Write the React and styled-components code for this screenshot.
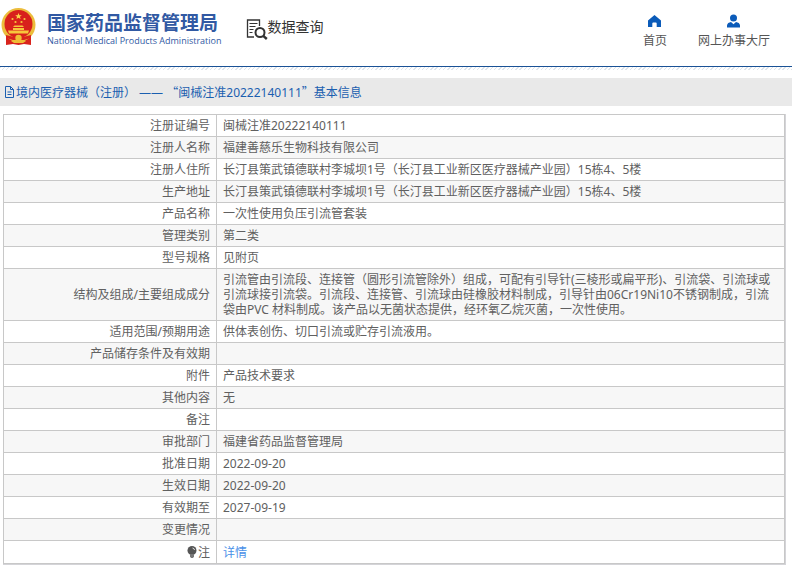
import React from 'react';
import styled, { createGlobalStyle } from 'styled-components';

const GlobalStyle = createGlobalStyle`
  body {
    margin: 0;
    background: #fff;
    color: #606060;
    font-family: "Noto Sans", "Noto Sans CJK SC", sans-serif;
    font-size: 12px;
    line-height: 15px;
  }

  a {
    text-decoration: none;
  }
`;

const Header = styled.header`
  display: flex;
  height: 66px;
  border-bottom: 1px solid #1a5296;
`;

const Hatching = styled.div`
  height: 3px;
  margin-bottom: 8px;
  background: repeating-linear-gradient(135deg, #dfe5ec 0 1px, #fff 1px 3px);
`;

const Brand = styled.a`
  display: flex;
  align-items: flex-start;
  gap: 11px;
  padding: 8px 0 0 1px;
  color: #3159a3;
`;

const BrandText = styled.div`
  padding-top: 2px;
  white-space: nowrap;
`;

const BrandName = styled.div`
  font-family: "Noto Sans CJK SC", sans-serif;
  font-size: 19px;
  line-height: 24px;
  font-weight: 700;
`;

const BrandEnglish = styled.div`
  font-family: "Open Sans", sans-serif;
  font-size: 9px;
  line-height: 14px;
`;

const Section = styled.h1`
  display: flex;
  align-items: flex-start;
  margin: 0;
  padding: 18px 0 0 24px;
  color: #333;
  font-size: 14px;
  line-height: 18px;
  font-weight: 400;
`;

const Nav = styled.nav`
  display: flex;
  gap: 31px;
  margin-left: auto;
  padding: 14px 22px 0 0;
`;

const NavLink = styled.a`
  display: flex;
  flex-direction: column;
  align-items: center;
  gap: 5px;
  color: #555;
  white-space: nowrap;

  svg {
    fill: #0b5bb9;
  }
`;

const TitleBar = styled.h2`
  display: flex;
  align-items: center;
  height: 28px;
  margin: 0 0 8px;
  padding-left: 4px;
  background: #e9e9e9;
  color: #1b5fb0;
  font-size: 12px;
  font-weight: 400;
`;

const Quote = styled.span`
  font-family: "Noto Sans CJK SC", sans-serif;
`;

const TableFrame = styled.div`
  margin: 0 6px 0 3px;
  border: solid #d4d4d8;
  border-width: 0 1px 1px 0;
`;

const Table = styled.table`
  width: 100%;
  border-collapse: collapse;
  table-layout: fixed;
`;

const Row = styled.tr`
  background: #fff;

  &:nth-child(even) {
    background: #f7f7f7;
  }
`;

const Label = styled.th`
  width: 200px;
  padding: 3px 6px;
  border: 1px solid #c8c8c8;
  font-weight: 400;
  text-align: right;
`;

const Value = styled.td`
  padding: 3px 6px;
  border: 1px solid #c8c8c8;
`;

const NoteRow = styled(Row)`
  th,
  td {
    padding-top: 4px;
  }
`;

const DetailLink = styled.a`
  color: #4a90e8;
`;

const BulbIcon = styled.svg`
  vertical-align: -1px;
  margin-right: 1px;
`;

const address = '长汀县策武镇德联村李城坝1号（长汀县工业新区医疗器械产业园）15栋4、5楼';

const rows = [
  ['注册证编号', '闽械注准20222140111'],
  ['注册人名称', '福建善慈乐生物科技有限公司'],
  ['注册人住所', address],
  ['生产地址', address],
  ['产品名称', '一次性使用负压引流管套装'],
  ['管理类别', '第二类'],
  ['型号规格', '见附页'],
  ['结构及组成/主要组成成分', '引流管由引流段、连接管（圆形引流管除外）组成，可配有引导针(三棱形或扁平形)、引流袋、引流球或引流球接引流袋。引流段、连接管、引流球由硅橡胶材料制成，引导针由06Cr19Ni10不锈钢制成，引流袋由PVC 材料制成。该产品以无菌状态提供，经环氧乙烷灭菌，一次性使用。'],
  ['适用范围/预期用途', '供体表创伤、切口引流或贮存引流液用。'],
  ['产品储存条件及有效期', ''],
  ['附件', '产品技术要求'],
  ['其他内容', '无'],
  ['备注', ''],
  ['审批部门', '福建省药品监督管理局'],
  ['批准日期', '2022-09-20'],
  ['生效日期', '2022-09-20'],
  ['有效期至', '2027-09-19'],
  ['变更情况', ''],
];

function Emblem() {
  return (
    <svg width="35" height="38" viewBox="0 0 35 38" aria-hidden="true">
      <path d="M5 28h25v9l-7-1-5.500 1-5.500-1-7 1z" fill="#d9241d" />
      <circle cx="17.500" cy="17" r="17" fill="#ecbd3c" />
      <circle cx="17.500" cy="16" r="14" fill="#d8211c" />
      <path d="M17.500 5l.9 2.200 2.400.1-1.900 1.500.7 2.300-2.100-1.300-2.100 1.300.7-2.300-1.900-1.500 2.400-.1z" fill="#fbd64a" />
      <g fill="#f7c63c">
        <circle cx="11.500" cy="11" r="1.100" />
        <circle cx="23.500" cy="11" r="1.100" />
        <circle cx="14.500" cy="14" r="1.100" />
        <circle cx="20.500" cy="14" r="1.100" />
        <path d="M12 19l1.500-1.500h8L23 19zM12 20h11v2H12zM7 22.500h21l-1 3H8z" />
      </g>
      <path d="M5 27l8 2h9l8-2v3l-7 2H12l-7-2z" fill="#d9241d" />
      <circle cx="17.500" cy="30" r="3.200" fill="#f0bd35" />
      <path d="M10 33l4-1 3.500 2 3.500-2 4 1-3 2h-9z" fill="#efbc35" />
    </svg>
  );
}

function SearchDocIcon() {
  return (
    <svg width="22" height="22" viewBox="0 0 22 22" fill="none" stroke="#333" aria-hidden="true">
      <path d="M8 19H1.500V2H13.500v6" strokeWidth="1.300" />
      <path d="M3.500 5.500h8M3.500 8.500h6M3.500 11.500h4M3.500 14.500h3" />
      <circle cx="14" cy="14.500" r="4.500" strokeWidth="2" />
      <path d="M17.300 17.800l3.500 3.200" strokeWidth="2.400" />
    </svg>
  );
}

function App() {
  return (
    <>
      <GlobalStyle />
      <Header>
        <Brand href="#">
          <Emblem />
          <BrandText>
            <BrandName>国家药品监督管理局</BrandName>
            <BrandEnglish>National Medical Products Administration</BrandEnglish>
          </BrandText>
        </Brand>
        <Section>
          <SearchDocIcon />
          数据查询
        </Section>
        <Nav>
          <NavLink href="#">
            <svg width="13" height="14" viewBox="0 0 13 14" aria-hidden="true">
              <path d="M6.500 1L0 6.500V13h4.300V9.500q0-1 1-1h2.400q1 0 1 1V13H13V6.500z" />
            </svg>
            首页
          </NavLink>
          <NavLink href="#">
            <svg width="13" height="14" viewBox="0 0 13 14" aria-hidden="true">
              <circle cx="6.500" cy="4" r="3.500" />
              <path d="M0 13.500v-2C0 9.500 2 8.300 4 8l2.500 2.300L9 8c2 .3 4 1.500 4 3.500v2z" />
            </svg>
            网上办事大厅
          </NavLink>
        </Nav>
      </Header>
      <Hatching />
      <main>
        <TitleBar>
          <svg width="12" height="12" viewBox="0 0 12 12" fill="none" stroke="#1b5fb0" aria-hidden="true">
            <path d="M1.500 .5h5l3 3v8h-8zM6.500 .5v3h3M3.500 6h4M3.500 8.500h4" />
          </svg>
          <span>
            境内医疗器械（注册） —— <Quote>“</Quote>闽械注准20222140111<Quote>”</Quote>基本信息
          </span>
        </TitleBar>
        <TableFrame>
          <Table>
            <tbody>
              {rows.map(([label, value]) => (
                <Row key={label}>
                  <Label scope="row">{label}</Label>
                  <Value>{value}</Value>
                </Row>
              ))}
              <NoteRow>
                <Label scope="row">
                  <BulbIcon width="10" height="12" viewBox="0 0 10 12" aria-hidden="true">
                    <circle cx="5" cy="4.500" r="4.500" fill="#555" />
                    <path d="M3 8h4v2.500L6 12H4l-1-1.500z" fill="#777" />
                    <path d="M5.500 2q2 .3 2 2" fill="none" stroke="#ddd" />
                  </BulbIcon>
                  注
                </Label>
                <Value><DetailLink href="#">详情</DetailLink></Value>
              </NoteRow>
            </tbody>
          </Table>
        </TableFrame>
      </main>
    </>
  );
}

export default App;
